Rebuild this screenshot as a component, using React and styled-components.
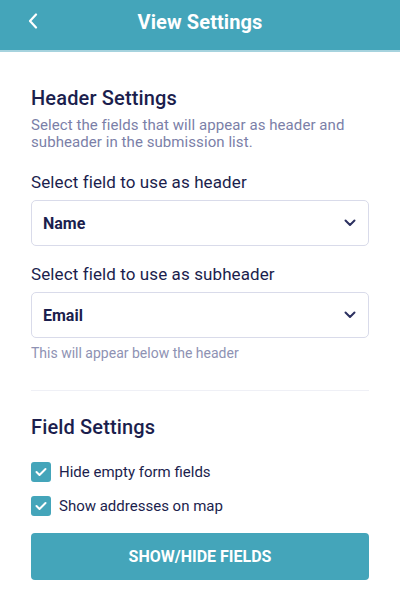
import React from "react";
import styled, { createGlobalStyle } from "styled-components";

const Global = createGlobalStyle`
  html, body { margin: 0; padding: 0; background: #ffffff; }
  body { font-family: Roboto, "Noto Sans", "Liberation Sans", sans-serif; -webkit-font-smoothing: antialiased; }
  * { box-sizing: border-box; }
`;

const Page = styled.div`
  width: 400px;
  min-height: 591px;
  background: #fff;
`;

const TopBar = styled.header`
  height: 52px;
  background: #44a5ba;
  border-bottom: 2px solid #a6d3de;
  display: flex;
  align-items: center;
  position: relative;
`;

const BackButton = styled.button`
  position: absolute;
  left: 22px;
  top: 7px;
  width: 22px;
  height: 28px;
  padding: 0;
  border: none;
  background: transparent;
  display: flex;
  align-items: center;
  justify-content: center;
`;

const Title = styled.h1`
  flex: 1;
  margin: 0;
  margin-top: -6px;
  text-align: center;
  color: #ffffff;
  font-size: 20px;
  font-weight: 700;
  letter-spacing: 0.1px;
`;

const Content = styled.main`
  padding: 32px 31px 0;
  display: flex;
  flex-direction: column;
`;

const SectionTitle = styled.h2`
  margin: 0;
  font-size: 20px;
  line-height: 28px;
  font-weight: 500;
  letter-spacing: 0.15px;
  color: #1b1e4d;
`;

const Description = styled.p`
  margin: 5px 0 0;
  font-size: 15px;
  line-height: 17px;
  letter-spacing: 0.07px;
  color: #7b7fa8;
`;

const Label = styled.label`
  display: block;
  margin-top: ${(p) => p.$top}px;
  font-size: 17px;
  line-height: 20px;
  letter-spacing: 0.1px;
  color: #1b1e4d;
`;

const SelectBox = styled.div`
  margin-top: 8px;
  height: 46px;
  border: 1px solid #d9dbea;
  border-radius: 5px;
  display: flex;
  align-items: center;
  justify-content: space-between;
  padding: 0 12px 0 11px;
`;

const SelectValue = styled.span`
  font-size: 16px;
  font-weight: 700;
  color: #1b1e4d;
`;

const Hint = styled.p`
  margin: 7px 0 0;
  font-size: 14px;
  line-height: 16px;
  color: #8e92b3;
`;

const Divider = styled.hr`
  margin: 29px 0 0;
  border: none;
  height: 1px;
  background: #eff0f6;
`;

const FieldTitle = styled(SectionTitle)`
  margin-top: 22px;
`;

const CheckList = styled.div`
  margin-top: 21px;
  display: flex;
  flex-direction: column;
  gap: 14px;
`;

const CheckRow = styled.label`
  display: flex;
  align-items: center;
  gap: 8px;
  height: 20px;
  font-size: 15px;
  color: #1b1e4d;
`;

const Box = styled.span`
  width: 20px;
  height: 20px;
  border-radius: 3px;
  background: #44a5ba;
  display: flex;
  align-items: center;
  justify-content: center;
`;

const ActionButton = styled.button`
  margin-top: 17px;
  height: 47px;
  width: 100%;
  border: none;
  border-radius: 4px;
  background: #44a5ba;
  color: #fff;
  font-family: inherit;
  font-size: 16px;
  font-weight: 700;
`;

const Chevron = () => (
  <svg width="12" height="8" viewBox="0 0 12 8" fill="none">
    <path d="M1.5 1.5 L6 6 L10.5 1.5" stroke="#2c3160" strokeWidth="2" strokeLinecap="round" strokeLinejoin="round" />
  </svg>
);

const Check = () => (
  <svg width="12" height="10" viewBox="0 0 12 10" fill="none">
    <path d="M1.5 5 L4.5 8 L10.5 2" stroke="#fff" strokeWidth="2" strokeLinecap="round" strokeLinejoin="round" />
  </svg>
);

const Back = () => (
  <svg width="10" height="16" viewBox="0 0 10 16" fill="none">
    <path d="M8 1.5 L2 8 L8 14.5" stroke="#fff" strokeWidth="2.2" strokeLinecap="round" strokeLinejoin="round" />
  </svg>
);

export default function App() {
  return (
    <Page>
      <Global />
      <TopBar>
        <BackButton aria-label="Back"><Back /></BackButton>
        <Title>View Settings</Title>
      </TopBar>
      <Content>
        <SectionTitle>Header Settings</SectionTitle>
        <Description>
          Select the fields that will appear as header and subheader in the submission list.
        </Description>
        <Label $top={21}>Select field to use as header</Label>
        <SelectBox>
          <SelectValue>Name</SelectValue>
          <Chevron />
        </SelectBox>
        <Label $top={18}>Select field to use as subheader</Label>
        <SelectBox>
          <SelectValue>Email</SelectValue>
          <Chevron />
        </SelectBox>
        <Hint>This will appear below the header</Hint>
        <Divider />
        <FieldTitle>Field Settings</FieldTitle>
        <CheckList>
          <CheckRow><Box><Check /></Box>Hide empty form fields</CheckRow>
          <CheckRow><Box><Check /></Box>Show addresses on map</CheckRow>
        </CheckList>
        <ActionButton>SHOW/HIDE FIELDS</ActionButton>
      </Content>
    </Page>
  );
}
